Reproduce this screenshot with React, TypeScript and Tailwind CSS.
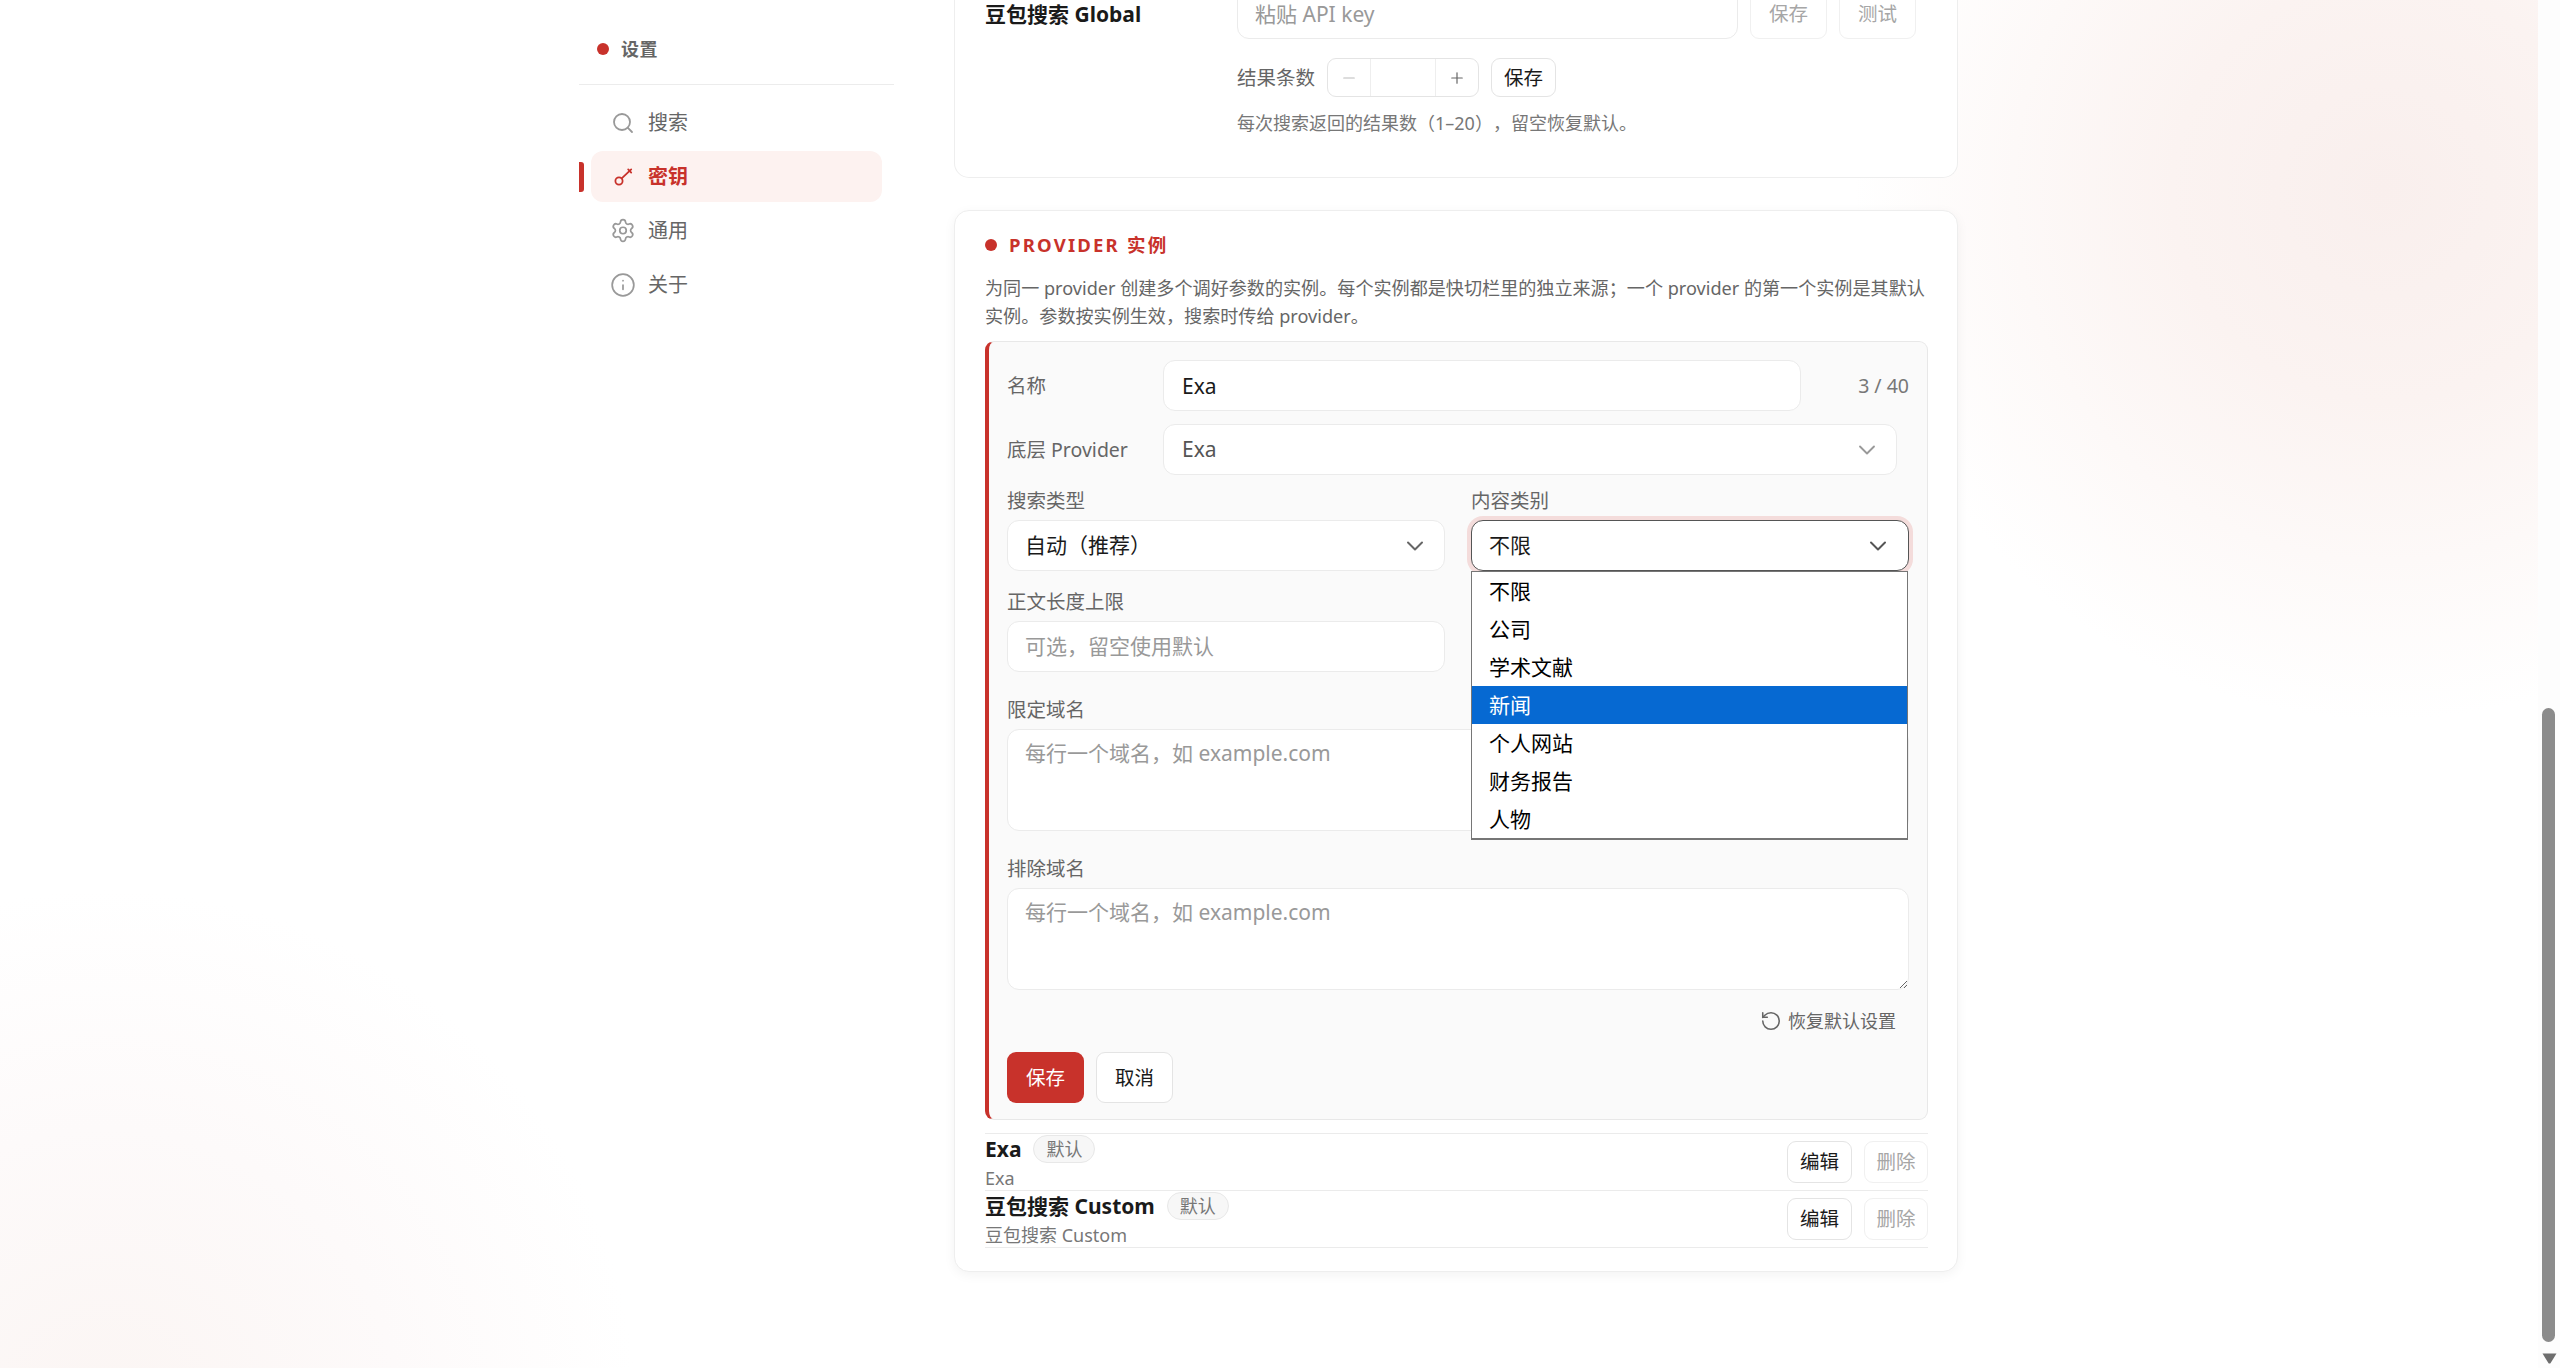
import { Search, Settings, Info, ChevronDown, RotateCcw, Minus, Plus } from "lucide-react";

const inputBase =
  "block bg-white border border-[#ebebeb] rounded-[12px] text-[21px] text-[#1a1a1a] placeholder:text-[#999] outline-none px-[17px]";

function KeyIcon() {
  return (
    <svg viewBox="0 0 24 24" fill="none" stroke="#c8322b" strokeWidth="1.8" strokeLinecap="round" className="w-[24px] h-[24px]">
      <circle cx="8" cy="16" r="3.6" />
      <path d="M10.7 13.4 20.2 4.4" />
      <path d="M17.2 4.4 20.2 7.6" />
    </svg>
  );
}

function NavItem({ icon, label, active }: { icon: React.ReactNode; label: string; active?: boolean }) {
  return (
    <div
      className={
        active
          ? "relative flex items-center h-[51px] rounded-[12px] bg-[#fdf2f0] pl-[19px] gap-[12px] text-[20px] font-bold text-[#c8322b]"
          : "relative flex items-center h-[51px] rounded-[12px] pl-[19px] gap-[12px] text-[20px] text-[#666]"
      }
    >
      {active && <span className="absolute left-[-12px] top-[11px] h-[30px] w-[5px] rounded-r-[3px] bg-[#c8322b]" />}
      <span className="w-[26px] flex justify-center items-center">{icon}</span>
      <span>{label}</span>
    </div>
  );
}

function Btn({ children, disabled, className = "" }: { children: React.ReactNode; disabled?: boolean; className?: string }) {
  return (
    <button
      className={
        "flex items-center justify-center rounded-[9px] bg-white text-[19.5px] border " +
        (disabled ? "border-[#f0f0f0] text-[#a6a6a6] " : "border-[#e4e4e4] text-[#1a1a1a] ") +
        className
      }
    >
      {children}
    </button>
  );
}

function InstanceRow({ name, sub }: { name: string; sub: string }) {
  return (
    <div className="flex items-center justify-between h-[57px] border-b border-[#ebebeb]">
      <div className="flex flex-col">
        <div className="flex items-center gap-[12px] h-[28px] mt-[1px]">
          <span className="text-[21px] font-bold text-[#1a1a1a] leading-[28px]">{name}</span>
          <span className="flex items-center h-[28px] px-[12px] rounded-full bg-[#f7f7f7] border border-[#e8e8e8] text-[18px] text-[#777]">默认</span>
        </div>
        <span className="mt-[3px] h-[24px] text-[18px] leading-[24px] text-[#777]">{sub}</span>
      </div>
      <div className="flex gap-[12px]">
        <Btn className="w-[65px] h-[42px]">编辑</Btn>
        <Btn disabled className="w-[64px] h-[42px]">删除</Btn>
      </div>
    </div>
  );
}

const options = ["不限", "公司", "学术文献", "新闻", "个人网站", "财务报告", "人物"];

export default function App() {
  return (
    <div className="flex h-screen w-full overflow-hidden [text-spacing-trim:space-all] font-['Noto_Sans','Noto_Sans_CJK_SC',sans-serif] bg-white bg-[radial-gradient(circle_530px_at_2384px_190px,#f9efed_0%,#fbf3f1_40%,#ffffff00_100%),radial-gradient(circle_530px_at_107px_1420px,#fbf5f3_0%,#fdfafa_55%,#ffffff00_100%)]">
      <div className="flex flex-1 pl-[579px] gap-[60px]">
        {/* sidebar */}
        <aside className="w-[315px]">
          <div className="flex items-center h-[85px] pt-[14px] pl-[18px] gap-[12px] border-b border-[#ececec]">
            <span className="w-[12px] h-[12px] rounded-full bg-[#c8322b]" />
            <span className="text-[18px] font-bold text-[#666] tracking-[0.5px]">设置</span>
          </div>
          <nav className="flex flex-col gap-[3px] mt-[12px] ml-[12px] w-[291px]">
            <NavItem icon={<Search className="w-[24px] h-[24px] text-[#999]" strokeWidth={1.8} />} label="搜索" />
            <NavItem icon={<KeyIcon />} label="密钥" active />
            <NavItem icon={<Settings className="w-[27px] h-[27px] text-[#999]" strokeWidth={1.6} />} label="通用" />
            <NavItem icon={<Info className="w-[26px] h-[26px] text-[#999]" strokeWidth={1.6} />} label="关于" />
          </nav>
        </aside>

        {/* main */}
        <main className="w-[1004px] flex flex-col gap-[32px]">
          {/* card 1 */}
          <section className="h-[178px] bg-white rounded-b-[15px] border border-t-0 border-[#eeeeee] pl-[30px] pr-[40px] flex">
            <div className="w-[252px] text-[21px] font-bold text-[#1a1a1a] leading-[28px]">豆包搜索 Global</div>
            <div className="flex flex-col flex-1">
              <div className="flex gap-[12px] -mt-[12px]">
                <input readOnly placeholder="粘贴 API key" className={inputBase + " w-[501px] h-[51px]"} />
                <Btn disabled className="w-[77px] h-[51px]">保存</Btn>
                <Btn disabled className="w-[77px] h-[51px]">测试</Btn>
              </div>
              <div className="flex items-center mt-[19px] h-[39px]">
                <span className="text-[19.5px] text-[#666] w-[90px]">结果条数</span>
                <div className="flex h-[39px] w-[152px] bg-white border border-[#e4e4e4] rounded-[9px]">
                  <span className="w-[43px] flex items-center justify-center border-r border-[#eeeeee]">
                    <Minus className="w-[18px] h-[18px] text-[#bbb]" strokeWidth={1.6} />
                  </span>
                  <span className="flex-1" />
                  <span className="w-[43px] flex items-center justify-center border-l border-[#eeeeee]">
                    <Plus className="w-[18px] h-[18px] text-[#666]" strokeWidth={1.6} />
                  </span>
                </div>
                <Btn className="w-[65px] h-[39px] ml-[12px]">保存</Btn>
              </div>
              <p className="mt-[13px] text-[18px] leading-[27px] text-[#777]">每次搜索返回的结果数（1–20），留空恢复默认。</p>
            </div>
          </section>

          {/* card 2 */}
          <section className="h-[1062px] bg-white rounded-[15px] border border-[#eeeeee] shadow-[0_3px_12px_rgba(0,0,0,0.05)] pl-[30px] pr-[29px]">
            <div className="flex items-center gap-[12px] mt-[20px] h-[27px]">
              <span className="w-[12px] h-[12px] rounded-full bg-[#c8322b]" />
              <span className="text-[18.5px] font-bold tracking-[2.2px] text-[#c8322b]">PROVIDER 实例</span>
            </div>
            <p className="mt-[17px] text-[18.1px] leading-[27.5px] text-[#666]">
              为同一 provider 创建多个调好参数的实例。每个实例都是快切栏里的独立来源；一个 provider 的第一个实例是其默认实例。参数按实例生效，搜索时传给 provider。
            </p>

            {/* edit panel */}
            <div className="mt-[11px] h-[779px] bg-[#fafafa] border border-[#e8e8e8] border-l-[4px] border-l-[#c8322b] rounded-[9px] pl-[18px] pr-[18px] pt-[18px]">
              <div className="flex items-center h-[51px]">
                <span className="w-[156px] text-[19.5px] text-[#666]">名称</span>
                <input readOnly value="Exa" className={inputBase + " w-[638px] h-[51px] !px-[18px]"} />
                <span className="flex-1 text-right text-[19.5px] text-[#777]">3 / 40</span>
              </div>
              <div className="flex items-center h-[51px] mt-[13px]">
                <span className="w-[156px] text-[19.5px] text-[#666]">底层 Provider</span>
                <div className="flex items-center justify-between w-[734px] h-[51px] bg-white border border-[#ebebeb] rounded-[12px] pl-[18px] pr-[15px]">
                  <span className="text-[21px] text-[#555]">Exa</span>
                  <ChevronDown className="w-[28px] h-[28px] text-[#999]" strokeWidth={1.6} />
                </div>
              </div>

              <div className="grid grid-cols-2 gap-x-[26px] mt-[14px]">
                <div>
                  <div className="h-[24px] leading-[24px] text-[19.5px] text-[#666]">搜索类型</div>
                  <div className="flex items-center justify-between mt-[7px] h-[51px] bg-white border border-[#ebebeb] rounded-[12px] pl-[17px] pr-[15px]">
                    <span className="text-[21px] text-[#1a1a1a]">自动（推荐）</span>
                    <ChevronDown className="w-[28px] h-[28px] text-[#666]" strokeWidth={1.7} />
                  </div>
                </div>
                <div>
                  <div className="h-[24px] leading-[24px] text-[19.5px] text-[#666]">内容类别</div>
                  <div className="relative mt-[7px] h-[51px]">
                    <div className="flex items-center justify-between h-[51px] bg-white border border-[#555] rounded-[12px] pl-[17px] pr-[16px] shadow-[0_0_0_4px_#f4dcdb]">
                      <span className="text-[21px] text-[#1a1a1a]">不限</span>
                      <ChevronDown className="w-[28px] h-[28px] text-[#555]" strokeWidth={1.7} />
                    </div>
                    <ul className="absolute left-0 right-[1px] top-[51px] z-10 bg-white border border-[#767676] border-b-2">
                      {options.map((o) => (
                        <li
                          key={o}
                          className={
                            o === "新闻"
                              ? "h-[38px] leading-[38px] pl-[17px] text-[21px] bg-[#0669d2] text-white"
                              : "h-[38px] leading-[38px] pl-[17px] text-[21px] text-black"
                          }
                        >
                          {o}
                        </li>
                      ))}
                    </ul>
                  </div>
                </div>
              </div>

              <div className="mt-[19px] w-[438px]">
                <div className="h-[24px] leading-[24px] text-[19.5px] text-[#666]">正文长度上限</div>
                <input readOnly placeholder="可选，留空使用默认" className={inputBase + " mt-[7px] w-full h-[51px] !pb-[2px]"} />
              </div>

              <div className="mt-[26px] h-[24px] leading-[24px] text-[19.5px] text-[#666]">限定域名</div>
              <textarea readOnly placeholder="每行一个域名，如 example.com" className={inputBase + " mt-[7px] w-full h-[102px] pt-[8px] leading-[30px]"} />
              <div className="mt-[26px] h-[24px] leading-[24px] text-[19.5px] text-[#666]">排除域名</div>
              <textarea readOnly placeholder="每行一个域名，如 example.com" className={inputBase + " mt-[7px] w-full h-[102px] pt-[8px] leading-[30px]"} />

              <div className="flex items-center justify-end gap-[6px] mt-[19px] h-[24px] pr-[13px] text-[18px] text-[#666]">
                <RotateCcw className="w-[22px] h-[22px] text-[#666]" strokeWidth={1.7} />
                <span>恢复默认设置</span>
              </div>
              <div className="flex gap-[12px] mt-[19px]">
                <button className="w-[77px] h-[51px] rounded-[9px] bg-[#c8322b] text-white text-[19.5px]">保存</button>
                <Btn className="w-[77px] h-[51px]">取消</Btn>
              </div>
            </div>

            {/* list */}
            <div className="mt-[13px] border-t border-[#ebebeb]">
              <InstanceRow name="Exa" sub="Exa" />
              <InstanceRow name="豆包搜索 Custom" sub="豆包搜索 Custom" />
            </div>
          </section>
        </main>
      </div>

      {/* scrollbar */}
      <div className="w-[22px] h-full bg-[#fdfdfd] flex flex-col items-center pt-[708px]">
        <div className="w-[13px] h-[634px] rounded-full bg-[#8b8b8b] -ml-[1px]" />
        <svg viewBox="0 0 15 11" className="w-[15px] h-[11px] mt-[11px]">
          <path d="M0.5 0.5H14.5L8.5 10.2Q7.5 11 6.5 10.2Z" fill="#6e6e6e" />
        </svg>
      </div>
    </div>
  );
}
